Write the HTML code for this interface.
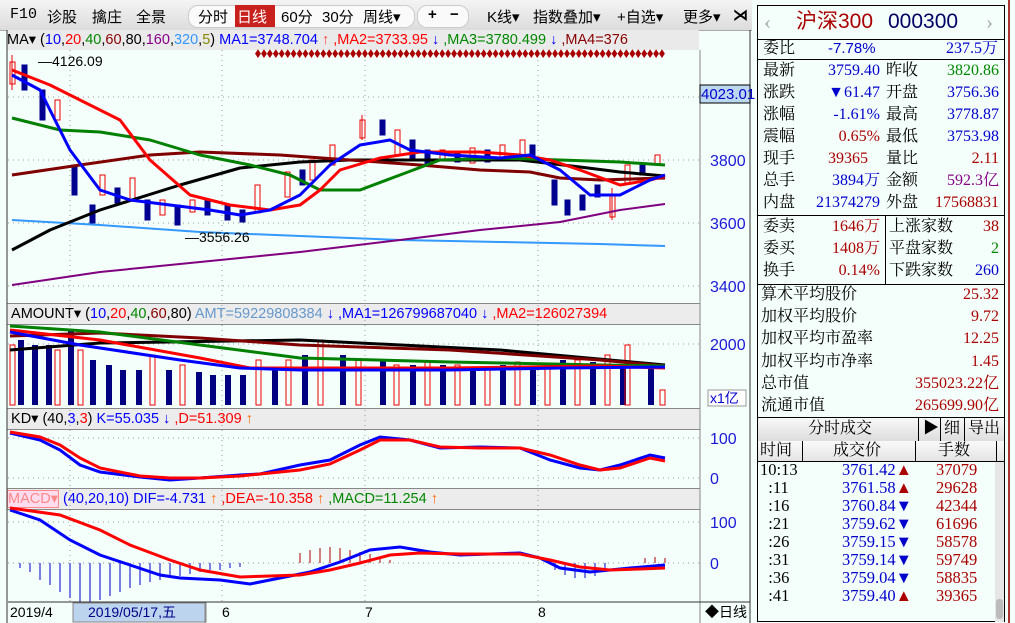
<!DOCTYPE html><html><head><meta charset="utf-8"><style>
body{margin:0;width:1015px;height:623px;overflow:hidden;background:#f4fefa;font-family:"Liberation Sans","Noto Sans CJK SC",sans-serif;position:relative}
.a{position:absolute;white-space:nowrap}
.tb{position:absolute;top:0;left:0;width:752px;height:30px;background:linear-gradient(#f4f4f4,#dcdcdc);border-bottom:1px solid #aaa}
.tb span{position:absolute;top:6px;font-size:15px;color:#000}
.hdr{position:absolute;left:7px;width:693px;height:20px;background:#ececec;font-size:14.5px;line-height:20px;border-top:1px solid #888;border-bottom:1px solid #888;overflow:hidden}
.rp{font-family:"Liberation Serif","Noto Serif CJK SC",serif;font-size:16px}
.r{position:absolute;line-height:22px}
</style></head><body>
<div class="tb">
<span style="left:10px;font-family:'Liberation Mono'">F10</span><span style="left:47px">诊股</span><span style="left:92px">擒庄</span><span style="left:136px">全景</span>
<div class="a" style="left:188px;top:5px;width:225px;height:21px;background:#fafafa;border-radius:10px;border:1px solid #ccc"></div>
<span style="left:198px">分时</span>
<div class="a" style="left:235px;top:5px;width:40px;height:22px;background:#c8201c"></div><span style="left:237px;color:#fff">日线</span>
<span style="left:281px">60分</span><span style="left:322px">30分</span><span style="left:363px">周线▾</span>
<div class="a" style="left:417px;top:5px;width:50px;height:21px;background:#fafafa;border-radius:10px;border:1px solid #ccc"></div>
<span style="left:428px;font-weight:bold">+</span><span style="left:450px;font-weight:bold">−</span>
<span style="left:487px">K线▾</span><span style="left:533px">指数叠加▾</span><span style="left:617px">+自选▾</span><span style="left:683px">更多▾</span>
<span style="left:733px;font-weight:bold">⋊</span>
</div>
<div class="a" style="left:7px;top:30px;height:20px;background:#eaeaea;font-size:14.5px;line-height:20px;overflow:hidden;width:692px">
<span style="color:#000">MA▾ (</span><span style="color:#00f">10</span>,<span style="color:#f00">20</span>,<span style="color:#080">40</span>,<span style="color:#800">60</span>,80,<span style="color:#808">160</span>,<span style="color:#39f">320</span>,<span style="color:#880">5</span>) <span style="color:#00f">MA1=3748.704 </span><span style="color:#f44">↑</span> <span style="color:#f00">,MA2=3733.95 </span><span style="color:#00f">↓</span> <span style="color:#080">,MA3=3780.499 </span><span style="color:#00f">↓</span> <span style="color:#800">,MA4=376</span></div>
<div class="hdr" style="top:303px"><span>&nbsp;AMOUNT▾ (</span><span style="color:#00f">10</span>,<span style="color:#f00">20</span>,<span style="color:#080">40</span>,<span style="color:#800">60</span>,80) <span style="color:#69c">AMT=59229808384 </span><span style="color:#00f">↓</span><span style="color:#00f"> ,MA1=126799687040 ↓</span><span style="color:#f00"> ,MA2=126027394</span></div>
<div class="hdr" style="top:408px"><span>&nbsp;KD▾ (40,</span><span style="color:#00f">3</span>,<span style="color:#f00">3</span>) <span style="color:#00f">K=55.035 ↓</span><span style="color:#f00"> ,D=51.309 </span><span style="color:#f60">↑</span></div>
<div class="hdr" style="top:488px"><span style="color:#f88;border:1px solid #f88;background:#fde">MACD▾</span> <span style="color:#00f">(40,20,10)</span> <span style="color:#00f">DIF=-4.731 </span><span style="color:#f60">↑</span><span style="color:#f00"> ,DEA=-10.358 </span><span style="color:#f60">↑</span><span style="color:#080"> ,MACD=11.254 </span><span style="color:#f60">↑</span></div>
<svg class="a" style="left:0;top:0" width="756" height="623">
<g fill="none">
<line x1="7" y1="30" x2="7" y2="623" stroke="#333"/>
<line x1="700" y1="50" x2="700" y2="603" stroke="#888"/>
<line x1="750" y1="30" x2="750" y2="623" stroke="#333"/>
<g stroke="#999" stroke-dasharray="1,4">
<line x1="70" y1="50" x2="70" y2="602"/><line x1="222" y1="50" x2="222" y2="602"/><line x1="365" y1="50" x2="365" y2="602"/><line x1="538" y1="50" x2="538" y2="602"/>
<line x1="8" y1="97" x2="700" y2="97"/><line x1="8" y1="160" x2="700" y2="160"/><line x1="8" y1="223" x2="700" y2="223"/><line x1="8" y1="286" x2="700" y2="286"/>
<line x1="8" y1="344" x2="700" y2="344"/><line x1="8" y1="438" x2="700" y2="438"/><line x1="8" y1="478" x2="700" y2="478"/><line x1="8" y1="522" x2="700" y2="522"/><line x1="8" y1="563" x2="700" y2="563"/>
</g>
</g>
<text x="255" y="57" font-size="9" fill="#a00" textLength="410" lengthAdjust="spacingAndGlyphs">◆◆◆◆◆◆◆◆◆◆◆◆◆◆◆◆◆◆◆◆◆◆◆◆◆◆◆◆◆◆◆◆◆◆◆◆◆◆◆◆◆◆◆◆◆◆◆◆◆◆◆◆◆◆◆◆◆◆◆◆◆◆◆◆◆◆◆◆◆</text>
<g stroke-width="1">
<g stroke="#e00" fill="#f4fefa">
<rect x="10" y="62" width="5" height="22"/><rect x="55" y="100" width="5" height="20"/><rect x="100" y="175" width="5" height="20"/><rect x="130" y="178" width="5" height="22"/><rect x="160" y="200" width="5" height="15"/><rect x="190" y="200" width="5" height="12"/><rect x="255" y="185" width="5" height="28"/><rect x="285" y="172" width="5" height="25"/><rect x="310" y="160" width="5" height="20"/><rect x="330" y="145" width="5" height="20"/><rect x="360" y="120" width="5" height="18"/><rect x="395" y="130" width="5" height="25"/><rect x="440" y="150" width="5" height="10"/><rect x="470" y="148" width="5" height="15"/><rect x="500" y="145" width="5" height="12"/><rect x="520" y="140" width="5" height="15"/><rect x="610" y="195" width="5" height="22"/><rect x="625" y="165" width="5" height="18"/><rect x="655" y="155" width="5" height="10"/>
</g>
<g stroke="#e00"><line x1="12" y1="55" x2="12" y2="90"/><line x1="612" y1="188" x2="612" y2="220"/><line x1="362" y1="115" x2="362" y2="140"/></g>
<g fill="#000090" stroke="#000090">
<rect x="22" y="65" width="5" height="25"/><rect x="40" y="90" width="5" height="30"/><rect x="72" y="165" width="5" height="30"/><rect x="90" y="205" width="5" height="18"/><rect x="115" y="188" width="5" height="15"/><rect x="145" y="200" width="5" height="20"/><rect x="175" y="205" width="5" height="20"/><rect x="205" y="200" width="5" height="15"/><rect x="225" y="205" width="5" height="15"/><rect x="240" y="210" width="5" height="12"/><rect x="300" y="170" width="5" height="15"/><rect x="380" y="120" width="5" height="15"/><rect x="410" y="140" width="5" height="20"/><rect x="425" y="150" width="5" height="15"/><rect x="455" y="152" width="5" height="10"/><rect x="485" y="150" width="5" height="12"/><rect x="530" y="145" width="5" height="15"/><rect x="552" y="180" width="5" height="25"/><rect x="565" y="200" width="5" height="15"/><rect x="580" y="195" width="5" height="15"/><rect x="595" y="185" width="5" height="12"/><rect x="640" y="165" width="5" height="10"/>
</g>
</g>
<g fill="none" stroke-width="3" stroke-linejoin="round">
<polyline stroke="#3399ff" stroke-width="2" points="12,220 100,225 200,232 300,236 400,240 500,242 600,244 665,246"/>
<polyline stroke="#800080" stroke-width="2" points="12,285 100,272 200,262 300,252 400,240 480,230 560,222 620,210 665,204"/>
<polyline stroke="#000" points="12,250 50,230 100,210 180,185 240,168 300,162 350,160 450,160 520,160 580,167 620,172 665,176"/>
<polyline stroke="#800000" points="12,175 80,165 150,155 200,152 280,155 350,160 420,165 480,170 530,172 560,178 600,180 665,178"/>
<polyline stroke="#008000" points="12,118 60,130 100,132 150,140 200,155 250,165 290,175 320,190 360,190 400,175 440,160 500,158 560,160 620,162 665,165"/>
<polyline stroke="#ff0000" points="12,70 50,85 80,100 120,120 150,160 190,195 230,205 270,210 300,205 320,190 340,170 380,158 420,152 480,152 520,155 550,160 580,170 620,185 650,180 665,176"/>
<polyline stroke="#0000ff" points="12,75 40,90 70,150 100,190 130,200 170,205 210,210 240,215 270,210 300,195 330,165 360,145 390,140 410,150 450,155 500,158 530,155 560,170 590,195 620,195 650,180 665,175"/>
</g>
<text x="38" y="66" font-size="14">—4126.09</text>
<text x="185" y="242" font-size="14">—3556.26</text>
<g font-size="16" fill="#1a1ad8"><text x="710" y="166">3800</text><text x="710" y="229">3600</text><text x="710" y="292">3400</text><text x="710" y="350">2000</text><text x="710" y="444">100</text><text x="710" y="484">0</text><text x="710" y="528">100</text><text x="710" y="569">0</text></g>
<rect x="700" y="85" width="50" height="18" fill="#bcd8f0" stroke="#000"/><text x="701" y="99" font-size="15" fill="#00c">4023.01</text>
<rect x="708" y="390" width="38" height="16" fill="#fff" stroke="#999"/><text x="710" y="403" font-size="14" fill="#00c">x1亿</text>
<g>
<g fill="#000080"><rect x="18" y="340" width="6" height="65"/><rect x="32" y="345" width="6" height="60"/><rect x="46" y="345" width="6" height="60"/><rect x="68" y="330" width="6" height="75"/><rect x="90" y="360" width="6" height="45"/><rect x="106" y="365" width="6" height="40"/><rect x="120" y="370" width="6" height="35"/><rect x="136" y="370" width="6" height="35"/><rect x="166" y="370" width="6" height="35"/><rect x="196" y="372" width="6" height="33"/><rect x="210" y="375" width="6" height="30"/><rect x="225" y="375" width="6" height="30"/><rect x="240" y="375" width="6" height="30"/><rect x="272" y="370" width="6" height="35"/><rect x="302" y="355" width="6" height="50"/><rect x="340" y="355" width="6" height="50"/><rect x="380" y="360" width="6" height="45"/><rect x="410" y="365" width="6" height="40"/><rect x="440" y="365" width="6" height="40"/><rect x="470" y="368" width="6" height="37"/><rect x="500" y="365" width="6" height="40"/><rect x="530" y="368" width="6" height="37"/><rect x="560" y="360" width="6" height="45"/><rect x="590" y="362" width="6" height="43"/><rect x="620" y="365" width="6" height="40"/><rect x="648" y="368" width="6" height="37"/></g>
<g fill="none" stroke="#e00"><rect x="10" y="345" width="5" height="60"/><rect x="55" y="350" width="5" height="55"/><rect x="78" y="350" width="5" height="55"/><rect x="150" y="355" width="5" height="50"/><rect x="180" y="365" width="5" height="40"/><rect x="256" y="360" width="5" height="45"/><rect x="286" y="360" width="5" height="45"/><rect x="318" y="340" width="5" height="65"/><rect x="356" y="360" width="5" height="45"/><rect x="394" y="365" width="5" height="40"/><rect x="425" y="362" width="5" height="43"/><rect x="455" y="365" width="5" height="40"/><rect x="485" y="368" width="5" height="37"/><rect x="515" y="362" width="5" height="43"/><rect x="545" y="365" width="5" height="40"/><rect x="575" y="360" width="5" height="45"/><rect x="605" y="355" width="5" height="50"/><rect x="625" y="345" width="5" height="60"/><rect x="660" y="390" width="5" height="15"/></g>
<g fill="none" stroke-width="3"><polyline stroke="#000" points="10,350 100,343 300,340 500,350 665,365"/><polyline stroke="#800000" points="10,336 100,333 200,338 300,345 450,350 600,360 665,366"/><polyline stroke="#008000" points="10,326 100,332 200,345 300,358 450,362 600,365 665,366"/><polyline stroke="#f00" points="10,330 100,340 200,358 250,368 300,368 450,368 600,366 665,368"/><polyline stroke="#00f" points="10,332 80,345 180,360 240,368 300,370 450,370 560,368 665,367"/></g>
</g>
<g fill="none" stroke-width="3"><polyline stroke="#00f" points="10,433 40,440 60,450 80,465 100,472 140,477 170,480 200,478 240,475 260,474 300,465 330,460 360,445 380,437 410,440 440,448 480,447 520,448 550,460 580,468 600,470 620,465 650,455 665,458"/><polyline stroke="#f00" points="10,432 40,437 60,445 80,458 100,468 140,476 170,478 200,478 240,476 260,474 300,470 330,464 360,450 380,440 410,440 440,447 480,448 520,448 550,455 580,465 600,470 620,468 650,458 665,461"/></g>
<g stroke="#00c" stroke-width="1"><line x1="20" y1="563" x2="20" y2="568"/><line x1="30" y1="563" x2="30" y2="572"/><line x1="40" y1="563" x2="40" y2="580"/><line x1="50" y1="563" x2="50" y2="585"/><line x1="60" y1="563" x2="60" y2="592"/><line x1="70" y1="563" x2="70" y2="598"/><line x1="80" y1="563" x2="80" y2="602"/><line x1="90" y1="563" x2="90" y2="602"/><line x1="100" y1="563" x2="100" y2="600"/><line x1="110" y1="563" x2="110" y2="596"/><line x1="120" y1="563" x2="120" y2="592"/><line x1="130" y1="563" x2="130" y2="588"/><line x1="140" y1="563" x2="140" y2="585"/><line x1="150" y1="563" x2="150" y2="582"/><line x1="160" y1="563" x2="160" y2="580"/><line x1="170" y1="563" x2="170" y2="578"/><line x1="180" y1="563" x2="180" y2="576"/><line x1="190" y1="563" x2="190" y2="574"/><line x1="200" y1="563" x2="200" y2="572"/><line x1="210" y1="563" x2="210" y2="570"/><line x1="220" y1="563" x2="220" y2="570"/><line x1="230" y1="563" x2="230" y2="568"/><line x1="240" y1="563" x2="240" y2="567"/><line x1="555" y1="563" x2="555" y2="570"/><line x1="565" y1="563" x2="565" y2="575"/><line x1="575" y1="563" x2="575" y2="578"/><line x1="585" y1="563" x2="585" y2="578"/><line x1="595" y1="563" x2="595" y2="576"/><line x1="605" y1="563" x2="605" y2="572"/></g>
<g stroke="#a00"><line x1="300" y1="563" x2="300" y2="553"/><line x1="310" y1="563" x2="310" y2="550"/><line x1="320" y1="563" x2="320" y2="548"/><line x1="330" y1="563" x2="330" y2="547"/><line x1="340" y1="563" x2="340" y2="548"/><line x1="350" y1="563" x2="350" y2="550"/><line x1="360" y1="563" x2="360" y2="552"/><line x1="370" y1="563" x2="370" y2="554"/><line x1="380" y1="563" x2="380" y2="557"/><line x1="390" y1="563" x2="390" y2="560"/><line x1="645" y1="563" x2="645" y2="558"/><line x1="655" y1="563" x2="655" y2="557"/><line x1="665" y1="563" x2="665" y2="558"/></g>
<g fill="none" stroke-width="3"><polyline stroke="#00f" points="10,510 40,520 70,540 100,555 130,565 160,575 180,578 220,580 250,584 280,578 310,572 340,562 370,550 400,547 430,552 460,555 520,553 540,558 560,568 590,572 630,568 665,565"/><polyline stroke="#f00" points="10,508 60,515 100,530 130,545 170,560 200,570 240,577 270,576 300,575 330,570 360,563 390,555 420,553 460,554 520,554 550,560 580,567 610,570 640,569 665,568"/></g>
<line x1="8" y1="602" x2="750" y2="602" stroke="#333"/>
<rect x="73" y="603" width="133" height="19" fill="#bcd4ee" stroke="#888"/>
<g font-size="14"><text x="10" y="617">2019/4</text><text x="88" y="617" fill="#008">2019/05/17,五</text><text x="222" y="617">6</text><text x="365" y="617">7</text><text x="538" y="617">8</text><text x="705" y="617">◆日线</text></g>
<line x1="205" y1="603" x2="205" y2="623" stroke="#888"/><line x1="700" y1="603" x2="700" y2="623" stroke="#888"/>
</svg>
<div class="a rp" style="left:757px;top:5px;width:248px;height:617px;border:1px solid #000;box-sizing:border-box">
<div class="a" style="left:0;top:0;width:246px;height:33px;border-bottom:1px solid #000;font-size:21px;line-height:32px"><span style="color:#aaa;position:absolute;left:6px">‹</span><span style="color:#a00;position:absolute;left:38px;font-family:'Liberation Sans','Noto Sans CJK SC',sans-serif">沪深300</span><span style="color:#006;position:absolute;left:130px;font-family:'Liberation Sans',sans-serif">000300</span><span style="color:#aaa;position:absolute;left:228px">›</span></div>
<div class="a" style="left:0;top:33px;width:246px;height:20px;border-bottom:1px solid #000;line-height:20px"><span class="a" style="left:5px">委比</span><span class="a" style="left:70px;color:#00c;font-family:'Liberation Sans';font-size:15px">-7.78%</span><span class="a" style="right:6px;color:#00c">237.5万</span></div>
<div class="a" style="left:0;top:54px;width:246px;height:155px;border-bottom:1px solid #000">
<div class="r" style="top:0;left:5px">最新<br>涨跌<br>涨幅<br>震幅<br>现手<br>总手<br>内盘</div>
<div class="r" style="top:0;right:124px;text-align:right"><span style="color:#00c">3759.40</span><br><span style="color:#00c">▼61.47</span><br><span style="color:#00c">-1.61%</span><br><span style="color:#a00">0.65%</span><br><span style="color:#a00">39365&nbsp;&nbsp;&nbsp;</span><br><span style="color:#00c">3894万</span><br><span style="color:#00c">21374279</span></div>
<div class="r" style="top:0;left:128px">昨收<br>开盘<br>最高<br>最低<br>量比<br>金额<br>外盘</div>
<div class="r" style="top:0;right:5px;text-align:right"><span style="color:#080">3820.86</span><br><span style="color:#00c">3756.36</span><br><span style="color:#00c">3778.87</span><br><span style="color:#00c">3753.98</span><br><span style="color:#a00">2.11</span><br><span style="color:#808">592.3亿</span><br><span style="color:#a00">17568831</span></div>
</div>
<div class="a" style="left:0;top:210px;width:246px;height:68px;border-bottom:1px solid #000">
<div class="a" style="left:127px;top:0;width:1px;height:68px;background:#000"></div>
<div class="r" style="top:0;left:5px">委卖<br>委买<br>换手</div>
<div class="r" style="top:0;right:124px;text-align:right;color:#a00">1646万<br>1408万<br>0.14%</div>
<div class="r" style="top:0;left:131px">上涨家数<br>平盘家数<br>下跌家数</div>
<div class="r" style="top:0;right:5px;text-align:right"><span style="color:#a00">38</span><br><span style="color:#080">2</span><br><span style="color:#00c">260</span></div>
</div>
<div class="a" style="left:0;top:278px;width:246px;height:134px">
<div class="r" style="top:0;left:3px;line-height:22.2px">算术平均股价<br>加权平均股价<br>加权平均市盈率<br>加权平均市净率<br>总市值<br>流通市值</div>
<div class="r" style="top:0;right:5px;text-align:right;line-height:22.2px;color:#a00">25.32<br>9.72<br>12.25<br>1.45<br>355023.22亿<br>265699.90亿</div>
</div>
<div class="a" style="left:0;top:411px;width:246px;height:23px;background:linear-gradient(#f8f8f8,#ddd);border-top:1px solid #000;border-bottom:1px solid #000;line-height:22px"><span class="a" style="left:50px">分时成交</span><span class="a" style="left:160px;width:1px;height:23px;background:#000"></span><span class="a" style="left:165px">▶</span><span class="a" style="left:182px;width:1px;height:23px;background:#000"></span><span class="a" style="left:186px">细</span><span class="a" style="left:206px;width:1px;height:23px;background:#000"></span><span class="a" style="left:210px">导出</span></div>
<div class="a" style="left:0;top:435px;width:246px;height:20px;background:linear-gradient(#fafafa,#e4e4e4);border-bottom:1px solid #000;line-height:20px"><span class="a" style="left:2px">时间</span><span class="a" style="left:44px;width:1px;height:20px;background:#000"></span><span class="a" style="left:75px">成交价</span><span class="a" style="left:157px;width:1px;height:20px;background:#000"></span><span class="a" style="left:180px">手数</span><span class="a" style="left:238px;width:1px;height:20px;background:#000"></span></div>
<div class="r" style="top:455px;left:2px;line-height:18px;font-size:16.5px">10:13<br>&nbsp;&nbsp;:11<br>&nbsp;&nbsp;:16<br>&nbsp;&nbsp;:21<br>&nbsp;&nbsp;:26<br>&nbsp;&nbsp;:31<br>&nbsp;&nbsp;:36<br>&nbsp;&nbsp;:41</div>
<div class="r" style="top:455px;left:84px;line-height:18px;font-size:16.5px;color:#00c">3761.42<span style="color:#a00">▲</span><br>3761.58<span style="color:#a00">▲</span><br>3760.84▼<br>3759.62▼<br>3759.15▼<br>3759.14▼<br>3759.04▼<br>3759.40<span style="color:#a00">▲</span></div>
<div class="r" style="top:455px;left:178px;line-height:18px;font-size:16.5px;color:#a00">37079<br>29628<br>42344<br>61696<br>58578<br>59749<br>58835<br>39365</div>
<div class="a" style="left:237px;top:456px;width:9px;height:160px;background:#e6e6e6"></div>
<div class="a" style="left:238px;top:593px;width:7px;height:20px;background:#bbb;border-radius:3px"></div>
</div>
<div class="a" style="left:1008px;top:0;width:2px;height:623px;background:#a33"></div>
</body></html>
